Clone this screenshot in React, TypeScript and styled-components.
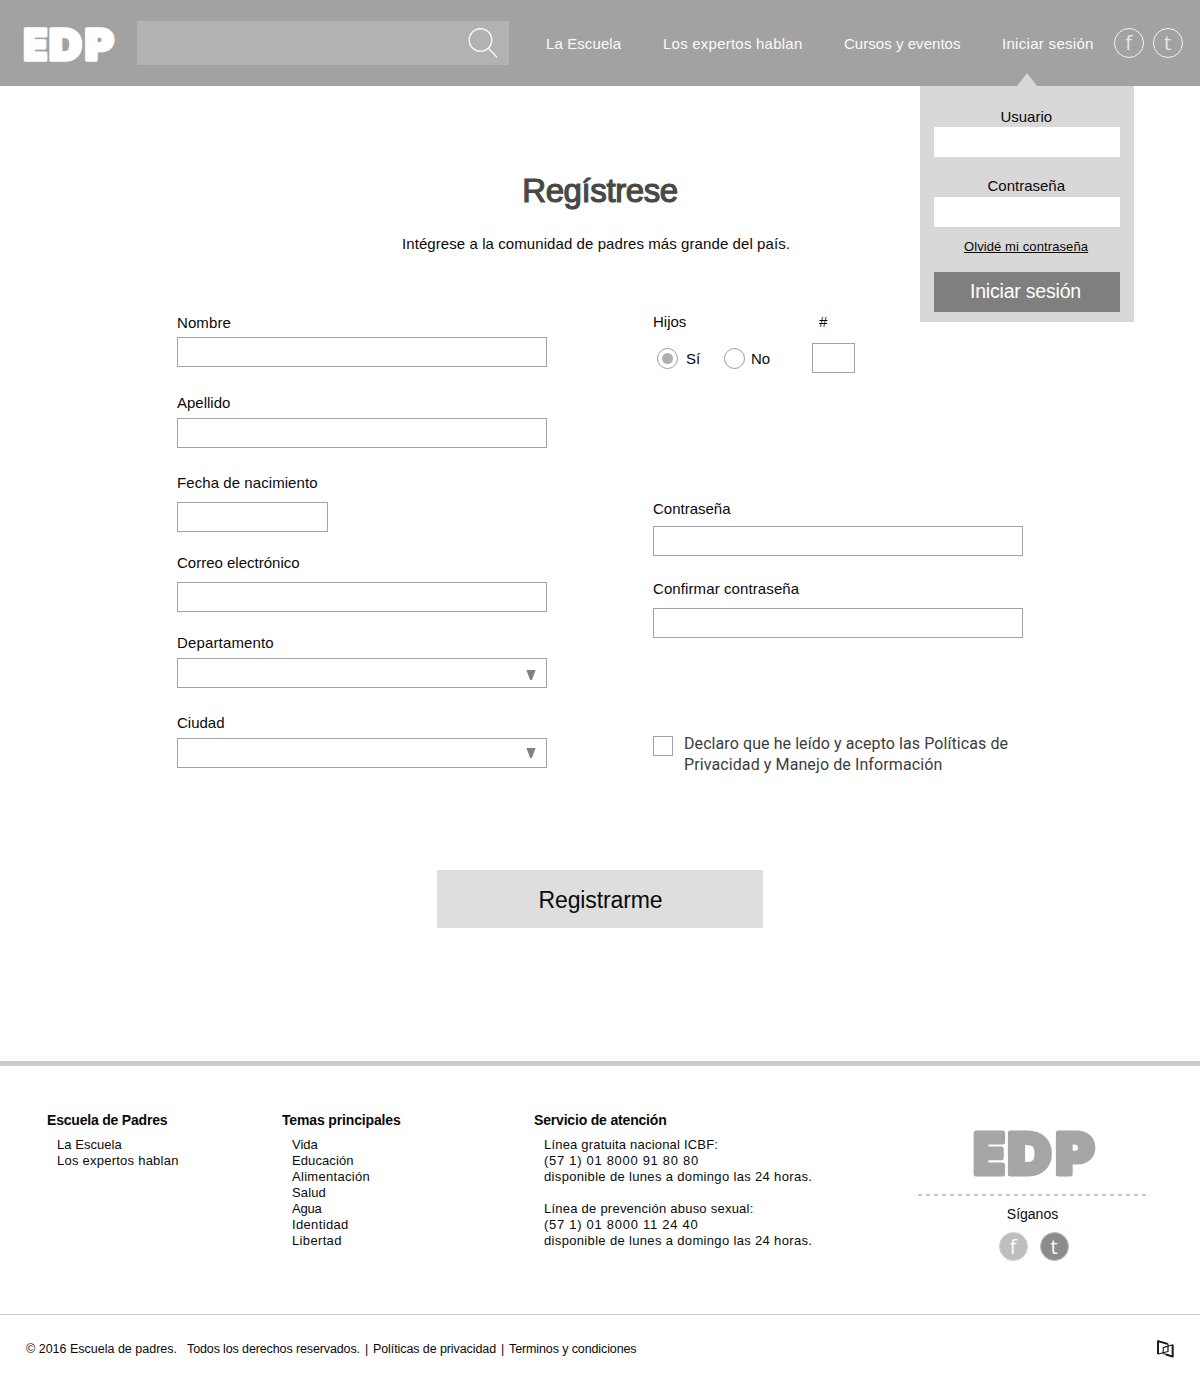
import React from "react";
import styled, { createGlobalStyle } from "styled-components";

const GlobalStyle = createGlobalStyle`
  *, *::before, *::after { box-sizing: border-box; }
  body {
    margin: 0;
    background: #fff;
    color: #0a0a0a;
    font-family: "Liberation Sans", Arial, sans-serif;
    font-size: 15px;
    line-height: 20px;
  }
  input, button { font: inherit; border-radius: 0; appearance: none; outline: none; }
`;

const Page = styled.div`
  width: 1200px;
  height: 1374px;
  display: flex;
  flex-direction: column;
`;

const Txt = styled.span<{ $ls?: number }>`
  letter-spacing: ${(p) => p.$ls ?? 0}px;
  white-space: pre;
`;

const Header = styled.header`
  position: relative;
  flex: none;
  height: 86px;
  padding-left: 24px;
  display: flex;
  align-items: center;
  background: #a2a2a2;
`;

const LogoSvg = styled.svg<{ $w: number; $mt?: number; $ml?: number }>`
  display: block;
  flex: none;
  width: ${(p) => p.$w}px;
  height: ${(p) => (p.$w * 47) / 122}px;
  margin-top: ${(p) => p.$mt ?? 0}px;
  margin-left: ${(p) => p.$ml ?? 0}px;
  overflow: visible;
  font-family: Inter, sans-serif;
  font-weight: 900;
  font-size: 56.5px;
  stroke-width: 5px;
  stroke-linejoin: round;
`;

const Search = styled.label`
  margin-left: 22px;
  width: 372px;
  height: 44px;
  padding-right: 10px;
  display: flex;
  align-items: center;
  background: #b2b2b2;
`;

const SearchInput = styled.input`
  flex: 1;
  min-width: 0;
  height: 100%;
  border: 0;
  background: transparent;
`;

const Nav = styled.nav`
  margin-left: 37px;
  padding-top: 2px;
  display: flex;
  color: #fafafa;
`;

const NavLink = styled.a<{ $w: number; $ls: number }>`
  width: ${(p) => p.$w}px;
  letter-spacing: ${(p) => p.$ls}px;
  white-space: nowrap;
`;

const Socials = styled.div<{ $gap: number; $ml?: number }>`
  margin-left: ${(p) => p.$ml ?? 0}px;
  display: flex;
  gap: ${(p) => p.$gap}px;
`;

const Social = styled.a<{ $bg?: string; $ring: string; $fg: string; $size: number }>`
  width: ${(p) => p.$size}px;
  height: ${(p) => p.$size}px;
  display: flex;
  justify-content: center;
  align-items: center;
  border: 1.4px solid ${(p) => p.$ring};
  border-radius: 50%;
  background: ${(p) => p.$bg ?? "transparent"};
  color: ${(p) => p.$fg};
  font-family: "Open Sans", sans-serif;
  font-weight: 400;
  font-size: 20px;
  line-height: 26px;
`;

const LoginBox = styled.form`
  position: absolute;
  top: 86px;
  left: 920px;
  width: 214px;
  height: 236px;
  padding: 21px 14px 0;
  display: flex;
  flex-direction: column;
  align-items: center;
  background: #d8d8d8;

  &::before {
    content: "";
    position: absolute;
    top: -13px;
    left: 97px;
    border: 10px solid transparent;
    border-top: 0;
    border-bottom: 13px solid #d8d8d8;
  }
`;

const LoginLabel = styled.span`
  padding-right: 1.5px;
`;

const LoginInput = styled.input<{ $mt?: number; $mb: number }>`
  width: 186px;
  height: 30px;
  flex: none;
  margin-top: ${(p) => p.$mt ?? 0}px;
  margin-bottom: ${(p) => p.$mb}px;
  border: 0;
  background: #fff;
`;

const Forgot = styled.a`
  margin-right: 2px;
  font-size: 13px;
  letter-spacing: 0.1px;
  text-decoration: underline;
  text-underline-offset: 1px;
`;

const LoginButton = styled.button`
  width: 186px;
  height: 40px;
  margin-top: 15px;
  padding: 0 3px 2px 0;
  border: 0;
  background: #7f7f7f;
  color: #fff;
  font-size: 19.5px;
  letter-spacing: -0.2px;
`;

const Main = styled.main`
  height: 975px;
  flex: none;
  display: flex;
  flex-direction: column;
  align-items: center;
`;

const Title = styled.h1`
  margin: 85px 0 0;
  color: #484848;
  font-size: 33px;
  font-weight: 400;
  line-height: 40px;
  letter-spacing: -0.4px;
  -webkit-text-stroke: 1.2px #484848;
`;

const Subtitle = styled.p`
  margin: 23px 8px 0 0;
  letter-spacing: 0.08px;
`;

const Columns = styled.div`
  width: 846px;
  height: 616px;
  padding-top: 59px;
  display: flex;
  justify-content: space-between;
`;

const Column = styled.div`
  width: 370px;
`;

const FieldBox = styled.label<{ $gap: number }>`
  height: 80px;
  display: flex;
  flex-direction: column;
  gap: ${(p) => p.$gap}px;
`;

const Box = styled.input<{ $w?: number }>`
  width: ${(p) => p.$w ?? 370}px;
  height: 30px;
  flex: none;
  padding: 0 6px;
  border: 1px solid #a2a2a2;
  background: #fff;
`;

const SelectBox = styled.div<{ $drop: number }>`
  width: 370px;
  height: 30px;
  padding: ${(p) => p.$drop}px 10px 0 0;
  display: flex;
  justify-content: flex-end;
  border: 1px solid #a2a2a2;
`;

const Children = styled.div`
  height: 187px;
  margin-top: -1px;
  display: grid;
  grid-template-columns: 159px 43px;
  grid-template-rows: 20px 30px;
  row-gap: 11px;
`;

const CountLabel = styled.span`
  padding-left: 7px;
`;

const Radios = styled.div`
  padding-left: 4px;
  display: flex;
  align-items: center;
`;

const Option = styled.label<{ $w: number; $gap: number }>`
  width: ${(p) => p.$w}px;
  display: flex;
  align-items: center;
  gap: ${(p) => p.$gap}px;
`;

const OptionText = styled.span`
  padding-top: 2px;
`;

const Dial = styled.span<{ $on?: boolean }>`
  width: 21px;
  height: 21px;
  flex: none;
  display: grid;
  place-items: center;
  border: 1px solid #999;
  border-radius: 50%;

  &::after {
    content: "";
    width: 11px;
    height: 11px;
    border-radius: 50%;
    background: ${(p) => (p.$on ? "#afafaf" : "transparent")};
  }
`;

const Terms = styled.label`
  margin-top: 74px;
  display: flex;
  gap: 11px;
  color: #3c3c3c;
  font-family: Roboto, sans-serif;
  font-size: 16px;
  line-height: 21px;
`;

const Check = styled.span`
  width: 20px;
  height: 20px;
  margin-top: 3px;
  flex: none;
  border: 1px solid #a2a2a2;
`;

const TermsText = styled.span`
  display: flex;
  flex-direction: column;
`;

const Submit = styled.button`
  width: 326.5px;
  height: 58px;
  flex: none;
  padding: 1px 0 0 1px;
  border: 0;
  background: #dedede;
  color: #0a0a0a;
  font-size: 23px;
  letter-spacing: -0.12px;
`;

const Footer = styled.footer`
  height: 253px;
  flex: none;
  padding: 44px 0 0 47px;
  display: flex;
  border-top: 5px solid #cbcbcb;
`;

const FootCol = styled.section<{ $w: number }>`
  width: ${(p) => p.$w}px;
`;

const FootTitle = styled.h2<{ $ls: number }>`
  margin: 0 0 7px;
  font-size: 14px;
  font-weight: 700;
  line-height: 20px;
  letter-spacing: ${(p) => p.$ls}px;
`;

const FootList = styled.ul`
  margin: 0;
  padding: 0 0 0 10px;
  list-style: none;
  font-size: 13px;
  line-height: 16px;
`;

const FootItem = styled.li`
  height: 16px;
`;

const Brand = styled.section`
  width: 228px;
  padding-top: 20px;
  display: flex;
  flex-direction: column;
  align-items: center;
`;

const Dashes = styled.div`
  width: 228px;
  height: 2px;
  margin: 17px 0 8px;
  background: repeating-linear-gradient(90deg, #c6c6c6 0 4px, transparent 4px 8px);
`;

const Follow = styled.p`
  margin: 0 0 8px 1px;
  font-size: 14px;
`;

const Legal = styled.div`
  height: 60px;
  flex: none;
  padding: 9px 26px 0;
  display: flex;
  justify-content: space-between;
  align-items: center;
  border-top: 1px solid #cbcbcb;
  font-size: 12.5px;
`;

const LegalText = styled.div`
  display: flex;
`;

const LegalPart = styled.span<{ $w: number; $ls?: number }>`
  width: ${(p) => p.$w}px;
  letter-spacing: ${(p) => p.$ls ?? 0}px;
  white-space: nowrap;
`;

function Logo({ width, color, mt, ml }: { width: number; color: string; mt?: number; ml?: number }) {
  return (
    <LogoSvg $w={width} $mt={mt} $ml={ml} viewBox="0 0 122 47" fill={color} stroke={color} aria-label="EDP">
      <text x="-0.5" y="43.8" textLength="31.5" lengthAdjust="spacingAndGlyphs">E</text>
      <text x="33.8" y="43.8" textLength="43.5" lengthAdjust="spacingAndGlyphs">D</text>
      <text x="81.7" y="43.8" textLength="38.5" lengthAdjust="spacingAndGlyphs">P</text>
    </LogoSvg>
  );
}

function Field({ label, ls, gap, width }: { label: string; ls?: number; gap: number; width?: number }) {
  return (
    <FieldBox $gap={gap}>
      <Txt $ls={ls}>{label}</Txt>
      <Box $w={width} />
    </FieldBox>
  );
}

function SelectField({ label, ls, drop }: { label: string; ls?: number; drop: number }) {
  return (
    <FieldBox $gap={5}>
      <Txt $ls={ls}>{label}</Txt>
      <SelectBox $drop={drop}>
        <svg width="10" height="10" viewBox="0 0 10 10">
          <path d="M0.4 0H9.6L5.9 10H4.1Z" fill="#828282" />
        </svg>
      </SelectBox>
    </FieldBox>
  );
}

const topics: [string, number][] = [
  ["Vida", 0],
  ["Educación", 0.1],
  ["Alimentación", 0.3],
  ["Salud", 0.15],
  ["Agua", -0.2],
  ["Identidad", 0.35],
  ["Libertad", 0.35],
];

const helplines: [string, number][] = [
  ["Línea gratuita nacional ICBF:", 0.2],
  ["(57 1) 01 8000 91 80 80", 0.7],
  ["disponible de lunes a domingo las 24 horas.", 0.34],
  ["", 0],
  ["Línea de prevención abuso sexual:", 0.24],
  ["(57 1) 01 8000 11 24 40", 0.72],
  ["disponible de lunes a domingo las 24 horas.", 0.34],
];

function List({ items }: { items: [string, number][] }) {
  return (
    <FootList>
      {items.map(([text, ls], i) => (
        <FootItem key={i}>
          <Txt $ls={ls}>{text}</Txt>
        </FootItem>
      ))}
    </FootList>
  );
}

export default function App() {
  return (
    <Page>
      <GlobalStyle />
      <Header>
        <Logo width={91} color="#fff" mt={3} />
        <Search>
          <SearchInput />
          <svg width="32" height="32" viewBox="0 0 32 32" fill="none" stroke="#f7f7f7" strokeWidth="1.4">
            <circle cx="13.5" cy="13" r="11.3" />
            <path d="M21.3 21.2L30 30.3" />
          </svg>
        </Search>
        <Nav>
          <NavLink $w={117} $ls={0.1}>La Escuela</NavLink>
          <NavLink $w={181} $ls={0.23}>Los expertos hablan</NavLink>
          <NavLink $w={158} $ls={0.04}>Cursos y eventos</NavLink>
          <NavLink $w={111.5} $ls={0.3}>Iniciar sesión</NavLink>
        </Nav>
        <Socials $gap={9}>
          <Social $size={30} $ring="#f4f4f4" $fg="#e6e6e6">f</Social>
          <Social $size={30} $ring="#f4f4f4" $fg="#e6e6e6">t</Social>
        </Socials>
        <LoginBox>
          <LoginLabel>Usuario</LoginLabel>
          <LoginInput $mb={19} />
          <LoginLabel>Contraseña</LoginLabel>
          <LoginInput $mt={1} $mb={10} />
          <Forgot>Olvidé mi contraseña</Forgot>
          <LoginButton type="button">Iniciar sesión</LoginButton>
        </LoginBox>
      </Header>

      <Main>
        <Title>Regístrese</Title>
        <Subtitle>Intégrese a la comunidad de padres más grande del país.</Subtitle>
        <Columns>
          <Column>
            <Field label="Nombre" ls={0.1} gap={4} />
            <Field label="Apellido" gap={5} />
            <Field label="Fecha de nacimiento" ls={0.07} gap={9} width={151} />
            <Field label="Correo electrónico" gap={9} />
            <SelectField label="Departamento" ls={0.15} drop={11} />
            <SelectField label="Ciudad" drop={9} />
          </Column>
          <Column>
            <Children>
              <Txt>Hijos</Txt>
              <CountLabel>#</CountLabel>
              <Radios>
                <Option $w={67} $gap={8}>
                  <Dial $on />
                  <OptionText>Sí</OptionText>
                </Option>
                <Option $w={60} $gap={6}>
                  <Dial />
                  <OptionText>No</OptionText>
                </Option>
              </Radios>
              <Box $w={43} />
            </Children>
            <Field label="Contraseña" gap={7} />
            <Field label="Confirmar contraseña" ls={0.1} gap={9} />
            <Terms>
              <Check />
              <TermsText>
                <Txt $ls={0.08}>Declaro que he leído y acepto las Políticas de</Txt>
                <Txt $ls={0.1}>Privacidad y Manejo de Información</Txt>
              </TermsText>
            </Terms>
          </Column>
        </Columns>
        <Submit type="button">Registrarme</Submit>
      </Main>

      <Footer>
        <FootCol $w={235}>
          <FootTitle $ls={-0.2}>Escuela de Padres</FootTitle>
          <List items={[["La Escuela", 0.05], ["Los expertos hablan", 0.24]]} />
        </FootCol>
        <FootCol $w={252}>
          <FootTitle $ls={-0.15}>Temas principales</FootTitle>
          <List items={topics} />
        </FootCol>
        <FootCol $w={384}>
          <FootTitle $ls={-0.18}>Servicio de atención</FootTitle>
          <List items={helplines} />
        </FootCol>
        <Brand>
          <Logo width={122} color="#a6a6a6" ml={5} />
          <Dashes />
          <Follow>Síganos</Follow>
          <Socials $gap={12} $ml={3}>
            <Social $size={29} $bg="#bebebe" $ring="#cfcfcf" $fg="#fff">f</Social>
            <Social $size={29} $bg="#8b8b8b" $ring="#bdbdbd" $fg="#fff">t</Social>
          </Socials>
        </Brand>
      </Footer>

      <Legal>
        <LegalText>
          <LegalPart $w={161}>© 2016 Escuela de padres.</LegalPart>
          <LegalPart $w={178} $ls={-0.12}>Todos los derechos reservados.</LegalPart>
          <LegalPart $w={8}>|</LegalPart>
          <LegalPart $w={128} $ls={-0.09}>Políticas de privacidad</LegalPart>
          <LegalPart $w={8}>|</LegalPart>
          <LegalPart $w={140} $ls={-0.11}>Terminos y condiciones</LegalPart>
        </LegalText>
        <svg width="17" height="18" viewBox="0 0 17 18" fill="none" stroke="#1c1c1c" strokeLinejoin="round">
          <path d="M1.2 1.2L11 4V11.5L1.2 14Z" strokeWidth="1.2" />
          <path d="M1 14V1.2L10.5 3.8" strokeWidth="1.9" />
          <path d="M6.2 7.6L15.8 4.8V16.6L6.2 13.6Z" strokeWidth="1.1" />
          <path d="M9 14.5L15.6 16.6V5" strokeWidth="1.9" />
        </svg>
      </Legal>
    </Page>
  );
}
